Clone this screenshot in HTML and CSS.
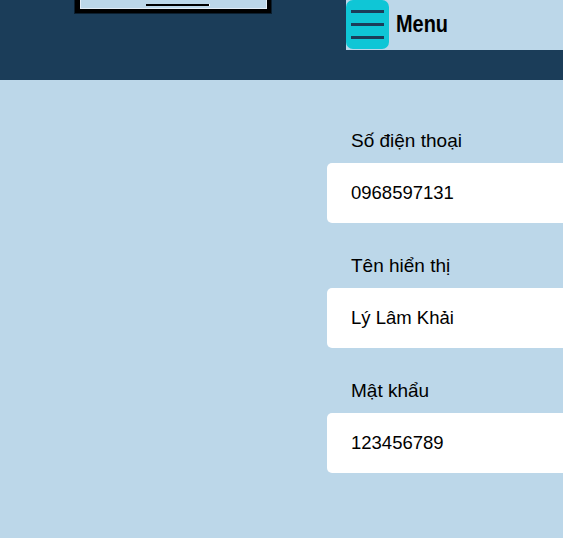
FILE: index.html
```html
<!DOCTYPE html>
<html lang="vi">
<head>
<meta charset="utf-8">
<title>Tài khoản</title>
<link rel="stylesheet" href="styles.css">
</head>
<body>
<header class="topbar">
  <div class="device">
    <div class="device-screen"><span class="device-slot"></span></div>
  </div>
  <nav class="nav">
    <button class="menu-btn" type="button" aria-label="Menu">
      <span class="bar"></span><span class="bar"></span><span class="bar"></span>
    </button>
    <span class="menu-label">Menu</span>
  </nav>
</header>
<main class="content">
  <div class="spacer"></div>
  <form class="form">
    <div class="field">
      <label class="label" for="phone">Số điện thoại</label>
      <input class="input" id="phone" type="text" value="0968597131">
    </div>
    <div class="field">
      <label class="label" for="name">Tên hiển thị</label>
      <input class="input" id="name" type="text" value="Lý Lâm Khải">
    </div>
    <div class="field">
      <label class="label" for="pass">Mật khẩu</label>
      <input class="input" id="pass" type="text" value="123456789">
    </div>
  </form>
</main>
</body>
</html>
```
FILE: styles.css
```css
html, body {
  margin: 0;
  padding: 0;
}
body {
  background: #bcd7e9;
  font-family: "Liberation Sans", Arial, sans-serif;
  color: #000;
  overflow-x: hidden;
}
.topbar {
  height: 80px;
  background: #1b3d59;
  display: flex;
  align-items: flex-start;
  padding-left: 74px;
}
.device {
  width: 191px;
  height: 13px;
  background: #000;
  border: 1px solid #0b1e2e;
  border-top: none;
  padding-left: 5px;
  box-sizing: content-box;
  flex: none;
}
.device-screen {
  width: 185px;
  height: 8px;
  background: #bcd7e9;
  border: 1px solid #e4eef7;
  border-top: none;
  display: flex;
  align-items: center;
}
.device-slot {
  display: block;
  width: 63px;
  height: 2px;
  margin-left: 65px;
  margin-top: 1px;
  background: #000;
  border-right: 1px solid #fff;
}
.nav {
  margin-left: 74px;
  flex: 1;
  height: 50px;
  background: #bcd7e9;
  display: flex;
  align-items: flex-start;
}
.menu-btn {
  width: 43px;
  height: 49px;
  border: none;
  border-radius: 7px;
  background: #0fc6d6;
  padding: 10px 0 0 5px;
  display: flex;
  flex-direction: column;
  gap: 10px;
  box-sizing: border-box;
  cursor: pointer;
  flex: none;
}
.bar {
  display: block;
  width: 33px;
  height: 3px;
  background: #1b3d59;
}
.menu-label {
  margin-left: 7px;
  margin-top: 10px;
  font-family: "Liberation Sans", Arial, sans-serif;
  font-weight: bold;
  font-size: 24px;
  line-height: 28px;
  transform: scaleX(0.83);
  transform-origin: left center;
}
.content {
  display: grid;
  grid-template-columns: 327px 320px;
}
.form {
  padding-top: 50px;
  display: flex;
  flex-direction: column;
  gap: 32px;
}
.field {
  display: flex;
  flex-direction: column;
  gap: 12px;
}
.label {
  padding-left: 24px;
  font-size: 19px;
  line-height: 21px;
}
.input {
  box-sizing: border-box;
  width: 320px;
  height: 60px;
  border: none;
  border-radius: 5px;
  background: #fff;
  padding: 0 24px;
  font-family: "Liberation Sans", Arial, sans-serif;
  font-size: 18.5px;
  color: #000;
  outline: none;
}
```
